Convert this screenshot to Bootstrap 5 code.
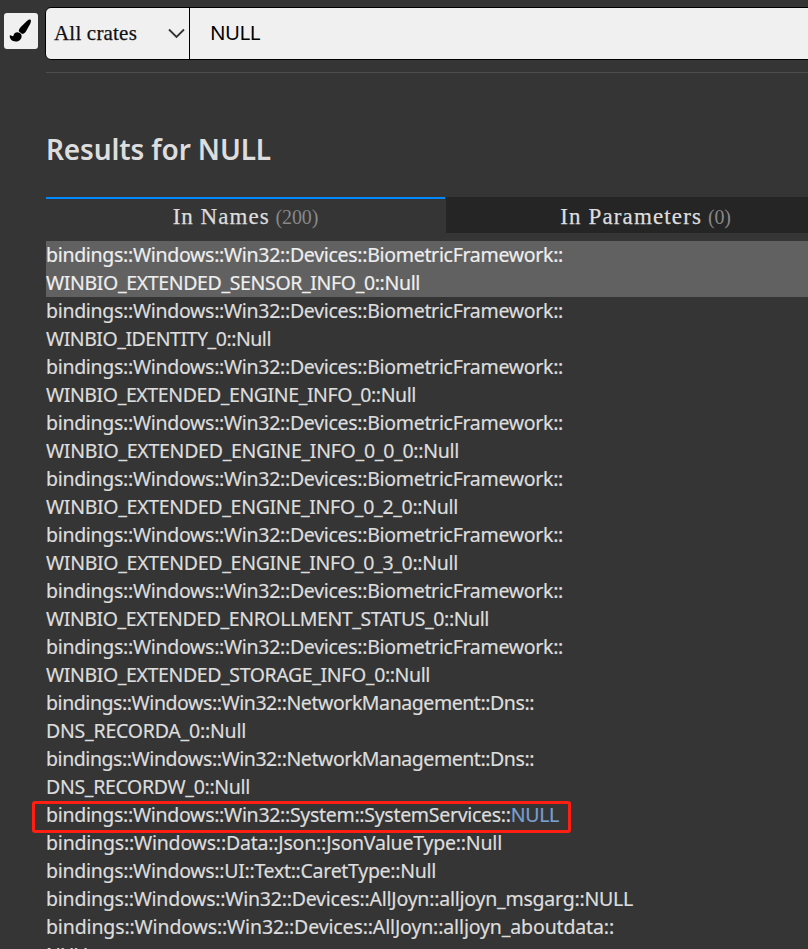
<!DOCTYPE html>
<html lang="en">
<head>
<meta charset="utf-8">
<meta name="viewport" content="width=device-width, initial-scale=1">
<title>Results for NULL</title>
<link href="https://cdn.jsdelivr.net/npm/bootstrap@5.3.0/dist/css/bootstrap.min.css" rel="stylesheet">
<style>
body{background:#353535;color:#ddd;font-family:"Noto Sans",sans-serif;height:949px;overflow:hidden}
.serif{font-family:"Liberation Serif",serif;-webkit-text-stroke:.25px currentColor}
.theme-btn{width:34px;height:36px;margin:13px 0 0 4px;background:#f0f0f0;border-radius:3px}
.content{margin-left:8px;min-width:0}
.search-box{height:53px;margin:7px -8px 0 -1px;border:1px solid #000;border-radius:6px;background:#f0f0f0;color:#111}
.crate-pick{width:144px;border-right:1px solid #000;padding:0 4px 0 8px;font-size:21px}
.query{padding:0 0 2px 20px;font-size:20.5px;color:#000}
.rule{height:1px;background:#4e4e4e;margin-top:12px}
h1.results-title{font-size:28px;line-height:40px;margin:56px 0 28px 0;font-weight:600}
.tab{width:399px;height:36px;font-size:23px;line-height:36px;border-top:2px solid #252525;background:#252525}
.tab.on{margin-right:1px;border-color:#0089ff;background:transparent}
.tab small{font-size:20px;color:#888;-webkit-text-stroke:0}
.results{margin-top:8px;font-size:19.5px;line-height:28px;-webkit-text-stroke:.2px currentColor}
.result.hit{background:#616161;color:#eee}
.result span{display:block;white-space:nowrap;width:max-content;height:28px}
.result b{font-weight:400;color:#79a0d0}
.callout{position:relative}
.callout::after{content:"";position:absolute;left:-14px;top:0;width:539px;height:32px;border:3px solid #ff1f12;border-radius:3px}
[data-w]{display:inline-block;white-space:nowrap}
</style>
</head>
<body>
<div class="d-flex align-items-start">
  <div class="theme-btn flex-shrink-0">
    <svg width="34" height="36" viewBox="0 0 34 36"><path d="M26.600 6.800c-1-.7-2.500 0-3.700 1.200l-6.400 6.200c-1.600 2-2 3.400-1.500 4.300l2.800 2.300c1.400.4 2.900-.8 4.100-2.400l4.200-7.300c.8-1.800 1.200-3.500.5-4.300zM15.400 19.800c-2.300-1.500-5.200-.3-5.600 2-.2 1.300-1 1.700-2.100 1-.7-.4-1.600-.7-1.900-.3-.5 3.200 2.300 6 5.900 6 3.400 0 5.700-2.300 5.900-5.100.1-1.400-.7-2.800-2.200-3.600z"/></svg>
  </div>
  <main class="content flex-grow-1">
    <div class="search-box d-flex">
      <div class="crate-pick serif d-flex align-items-center justify-content-between flex-shrink-0"><span data-w="83">All crates</span>
        <svg width="17" height="11" viewBox="0 0 17 11" fill="none" stroke="#333" stroke-width="1.800"><path d="M1 1.500l7.500 7.500L16 1.500"/></svg></div>
      <div class="query d-flex align-items-center"><span data-w="50">NULL</span></div>
    </div>
    <div class="rule"></div>
    <h1 class="results-title"><span data-w="225">Results for NULL</span></h1>
    <div class="d-flex">
      <div class="tab on serif text-center flex-shrink-0"><span data-w="97">In Names</span> <small data-w="43">(200)</small></div>
      <div class="tab serif text-center flex-shrink-0"><span data-w="142">In Parameters</span> <small data-w="23">(0)</small></div>
    </div>
    <div class="results">
      <div class="result hit"><span data-w="517">bindings::Windows::Win32::Devices::BiometricFramework::</span><span data-w="374">WINBIO_EXTENDED_SENSOR_INFO_0::Null</span></div>
      <div class="result"><span data-w="517">bindings::Windows::Win32::Devices::BiometricFramework::</span><span data-w="225">WINBIO_IDENTITY_0::Null</span></div>
      <div class="result"><span data-w="517">bindings::Windows::Win32::Devices::BiometricFramework::</span><span data-w="370">WINBIO_EXTENDED_ENGINE_INFO_0::Null</span></div>
      <div class="result"><span data-w="517">bindings::Windows::Win32::Devices::BiometricFramework::</span><span data-w="413">WINBIO_EXTENDED_ENGINE_INFO_0_0_0::Null</span></div>
      <div class="result"><span data-w="517">bindings::Windows::Win32::Devices::BiometricFramework::</span><span data-w="412">WINBIO_EXTENDED_ENGINE_INFO_0_2_0::Null</span></div>
      <div class="result"><span data-w="517">bindings::Windows::Win32::Devices::BiometricFramework::</span><span data-w="412">WINBIO_EXTENDED_ENGINE_INFO_0_3_0::Null</span></div>
      <div class="result"><span data-w="517">bindings::Windows::Win32::Devices::BiometricFramework::</span><span data-w="443">WINBIO_EXTENDED_ENROLLMENT_STATUS_0::Null</span></div>
      <div class="result"><span data-w="517">bindings::Windows::Win32::Devices::BiometricFramework::</span><span data-w="384">WINBIO_EXTENDED_STORAGE_INFO_0::Null</span></div>
      <div class="result"><span data-w="488">bindings::Windows::Win32::NetworkManagement::Dns::</span><span data-w="200">DNS_RECORDA_0::Null</span></div>
      <div class="result"><span data-w="488">bindings::Windows::Win32::NetworkManagement::Dns::</span><span data-w="204">DNS_RECORDW_0::Null</span></div>
      <div class="result callout"><span data-w="513">bindings::Windows::Win32::System::SystemServices::<b>NULL</b></span></div>
      <div class="result"><span data-w="456">bindings::Windows::Data::Json::JsonValueType::Null</span></div>
      <div class="result"><span data-w="390">bindings::Windows::UI::Text::CaretType::Null</span></div>
      <div class="result"><span data-w="587">bindings::Windows::Win32::Devices::AllJoyn::alljoyn_msgarg::NULL</span></div>
      <div class="result"><span data-w="568">bindings::Windows::Win32::Devices::AllJoyn::alljoyn_aboutdata::</span><span data-w="46">NULL</span></div>
    </div>
  </main>
</div>
<script src="https://cdn.jsdelivr.net/npm/bootstrap@5.3.0/dist/js/bootstrap.bundle.min.js"></script>
<script>
// Track each label so that it spans its data-w width.
document.querySelectorAll('[data-w]').forEach(function (el) {
  var spare = el.dataset.w - el.getBoundingClientRect().width;
  el.style.letterSpacing = spare / el.textContent.length + 'px';
});
</script>
</body>
</html>
